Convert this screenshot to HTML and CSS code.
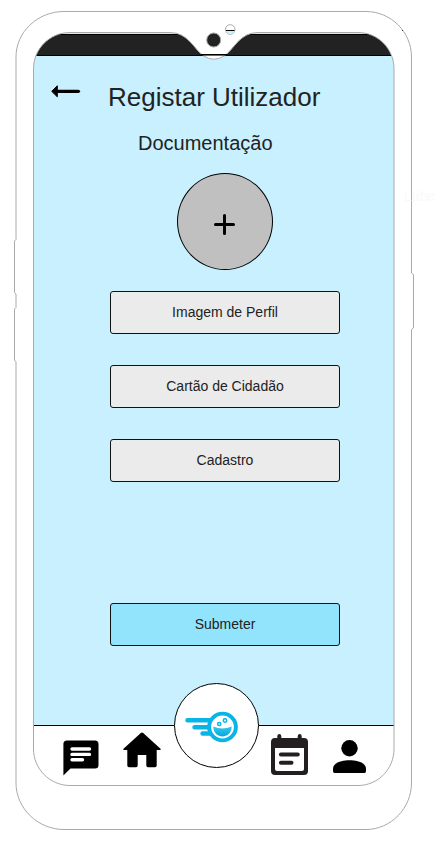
FILE: index.html
```html
<!DOCTYPE html>
<html lang="pt">
<head>
<meta charset="utf-8">
<title>Registar Utilizador</title>
<link rel="stylesheet" href="styles.css">
</head>
<body>
<div class="phone">
  <main class="screen">
    <div class="status"></div>
    <section class="content">
      <header class="header">
        <svg class="back" width="30" height="14" viewBox="0 0 30 14"><path d="M.7 7.300 6.300 1.800V12.800Z" fill="#000" stroke="#000" stroke-linejoin="round"/><path d="M5 7.300H27.400" stroke="#000" stroke-width="3.300" stroke-linecap="round"/></svg>
        <h1 class="title">Registar Utilizador</h1>
      </header>
      <h2 class="subtitle">Documentação</h2>
      <button class="add" aria-label="Adicionar"><svg width="22" height="22" viewBox="0 0 22 22"><path d="M10.500 1.500V19.500M1.500 10.500H19.500" stroke="#000" stroke-width="3" stroke-linecap="round"/></svg></button>
      <div class="options">
        <button class="btn">Imagem de Perfil</button>
        <button class="btn">Cartão de Cidadão</button>
        <button class="btn">Cadastro</button>
      </div>
      <button class="btn submit">Submeter</button>
    </section>
    <nav class="nav">
      <svg class="chat" width="36" height="36" viewBox="0 0 36 36"><path d="M4 .5H32Q35.500 .5 35.500 4V25Q35.500 28.500 32 28.500H7.500L.4 35.500V4Q.4 .5 4 .5Z"/><path d="M9 9H26.500M9 14.400H26.500M9 19.700H19.500" stroke="#fff" stroke-width="3.400" stroke-linecap="round"/></svg>
      <svg class="home" width="38" height="36" viewBox="0 0 38 36"><path d="M17.800 1Q19 0 20.200 1L37.500 16.800Q38.300 18 37 18H33.700V33.500Q33.700 35.300 32 35.300H25Q23.300 35.300 23.300 33.500V23H14.700V33.500Q14.700 35.300 13 35.300H6Q4.300 35.300 4.300 33.500V18H1Q-.3 18 .5 16.800Z"/></svg>
      <div class="brand">
        <svg width="54" height="34" viewBox="0 0 54 34"><defs><linearGradient id="smile" x2="0" y2="1"><stop stop-color="#35c9ee"/><stop offset="1" stop-color="#04a7dc"/></linearGradient></defs><g fill="none" stroke="#08b5e6" stroke-linecap="round" stroke-width="4.400"><path d="M2.500 10.200H26M9.500 17.200H24M17.500 23.500H25"/><circle cx="37.500" cy="17" r="13.400" fill="#fff" stroke-width="3.900"/></g><path d="M28.300 16.500Q37.500 20.500 46.700 16.500C46.700 29.700 28.300 29.700 28.300 16.500Z" fill="url(#smile)"/><g fill="#fff" stroke="#08b5e6" stroke-width="1.500"><circle cx="34.200" cy="14" r="1.600"/><circle cx="40" cy="10.500" r="1.700"/></g></svg>
      </div>
      <svg class="calendar" width="38" height="41" viewBox="0 0 38 41"><path fill="#231f20" fill-rule="evenodd" d="M6.300 4V2Q6.500 0 8.300 0T10.300 2V4H26.700V2Q26.900 0 28.700 0T30.700 2V4H33Q37 4 37 8V37Q37 41 33 41H4Q0 41 0 37V8Q0 4 4 4ZM4 14V35Q4 37 6 37H31Q33 37 33 35V14Z"/><path d="M9.900 20.500H26.800M9.900 28.700H20.500" stroke="#231f20" stroke-width="4" stroke-linecap="round"/></svg>
      <svg class="person" width="33" height="33" viewBox="0 0 33 33"><circle cx="16.500" cy="8.300" r="8.200"/><path d="M0 28.500C0 17.500 33 17.500 33 28.500V31Q33 33 31.500 33H1.500Q0 33 0 31Z"/></svg>
    </nav>
  </main>
  <svg class="frame" width="435" height="857" viewBox="0 0 435 857" fill="none" stroke="#aaa">
    <path fill="#fff" stroke="none" fill-rule="evenodd" d="M0 0H435V857H0ZM70 32.500H170C188 32.500 194 49 203 55.500Q213.500 63 225 55.500C234 49 240 32.500 258 32.500H358C378 32.500 394 48.500 394 69V749C394 769 378 785.500 358 785.500H70C50 785.500 33.500 769 33.500 749V69C33.500 48.500 50 32.500 70 32.500Z"/>
    <path d="M70 32.500H170C188 32.500 194 49 203 55.500Q213.500 63 225 55.500C234 49 240 32.500 258 32.500H358C378 32.500 394 48.500 394 69V749C394 769 378 785.500 358 785.500H70C50 785.500 33.500 769 33.500 749V69C33.500 48.500 50 32.500 70 32.500Z"/>
    <path d="M64 11.500H366C391 11.500 411.500 32 411.500 57V273L413.500 274.500V328L411.500 329.500V783C411.500 808 391 829.500 366 829.500H64C37.500 829.500 16 808 16 783V361.500L14.500 360.500V309L16 307.500V294L14.500 292.500V241L16 239.500V57C16 32 37.500 11.500 64 11.500Z"/>
    <path d="M201 54.800H227.500" stroke="#000" stroke-width="1.600"/>
    <circle cx="213.700" cy="40" r="7" fill="#222"/>
    <circle cx="230.200" cy="29.500" r="4.800" fill="#fff"/>
    <path d="M226 31A4.500 4.500 0 0 0 234.400 31Z" fill="#c8f0fe" stroke="none"/>
    <path d="M226 30.500H234.500" stroke="#000"/>
    <path d="M402 30.500H403" stroke="#333"/>
  </svg>
  <span class="label">Label</span>
</div>
</body>
</html>
```
FILE: styles.css
```css
* { box-sizing: border-box; }
body { margin: 0; background: #fff; font-family: "Liberation Sans", Arial, sans-serif; color: #222; }
.phone { position: relative; width: 435px; height: 857px; overflow: hidden; padding: 33px 41px 0 33px; }
.screen { display: flex; flex-direction: column; height: 753px; background: #c8f0fe; }
.status { height: 23px; background: #222; border-top: 1px solid #c8f0fe; border-bottom: 1px solid #000; box-shadow: inset 0 1px #000; }
.content { flex: 1; display: flex; flex-direction: column; align-items: center; padding: 26px 53px 0 76px; }
.header { display: flex; align-self: stretch; height: 31px; margin-left: -58px; margin-right: -40px; }
.back { flex: none; margin: 2px 27px 0 0; }
.title { margin: 0; font-size: 26px; line-height: 30px; font-weight: 400; white-space: nowrap; }
.subtitle { align-self: flex-start; margin: 18px 0 0 29px; font-size: 20px; line-height: 24px; font-weight: 400; }
.add { width: 96px; height: 97px; margin-top: 18px; padding: 6px 0 0; border: 1px solid #000; border-radius: 50%; background: #c0c0c0; display: grid; place-items: center; }
.options { display: flex; flex-direction: column; gap: 31px; margin-top: 21px; }
.btn { width: 230px; height: 43px; padding: 0 0 2px; border: 1px solid #111; border-radius: 3px; background: #ebebeb; color: #222; font: 14px "Liberation Sans", Arial, sans-serif; }
.submit { margin-top: 121px; background: #92e4fc; }
.nav { display: flex; align-items: flex-start; height: 61px; border-top: 1px solid #000; background: #fff; padding-left: 30px; }
.nav > * { flex: none; }
.chat { margin-top: 14px; }
.home { margin: 6px 13px 0 24px; }
.brand { width: 85px; height: 85px; margin-top: -43px; border: 1px solid #000; border-radius: 50%; background: #fff; display: grid; place-items: center; padding: 3px 10px 0 0; }
.calendar { margin: 8px 0 0 12px; }
.person { margin: 14px 0 0 24px; }
.frame { position: absolute; inset: 0; pointer-events: none; }
.label { position: absolute; left: 404px; top: 188px; font-size: 14px; color: #fafafa; }
```
